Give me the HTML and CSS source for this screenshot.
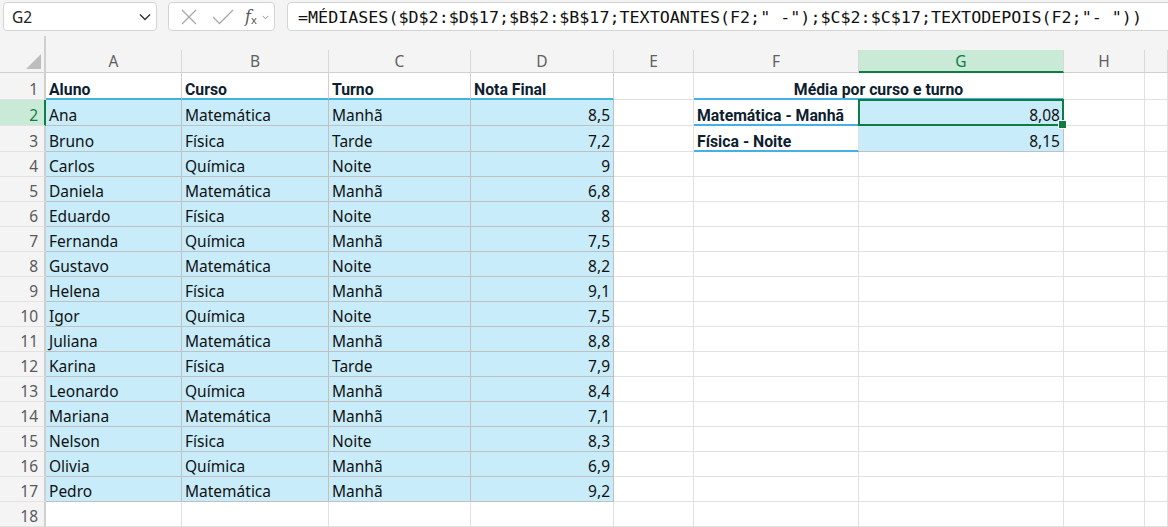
FILE: index.html
```html
<!DOCTYPE html>
<html lang="pt">
<head>
<meta charset="utf-8">
<title>Planilha</title>
<link rel="stylesheet" href="styles.css">
</head>
<body>
<div class="toolbar">
  <div class="namebox"><span>G2</span>
    <svg class="chev" width="12" height="8" viewBox="0 0 12 8"><path d="M1 1.5 L6 6.5 L11 1.5" fill="none" stroke="#333" stroke-width="1.4"/></svg>
  </div>
  <div class="fnbox">
    <svg class="ico" width="18" height="18" viewBox="0 0 18 18"><path d="M2 2 L16 16 M16 2 L2 16" stroke="#a8a8a8" stroke-width="1.3" fill="none"/></svg>
    <svg class="ico chk" width="22" height="16" viewBox="0 0 22 16"><path d="M1 8 L7.5 14.5 L21 1" stroke="#a8a8a8" stroke-width="1.3" fill="none"/></svg>
    <span class="fx"><i>f</i><sub>x</sub></span>
    <svg class="chev2" width="7" height="5" viewBox="0 0 7 5"><path d="M0.5 0.8 L3.5 3.8 L6.5 0.8" fill="none" stroke="#999" stroke-width="1"/></svg>
  </div>
  <div class="formula">=MÉDIASES($D$2:$D$17;$B$2:$B$17;TEXTOANTES(F2;" -");$C$2:$C$17;TEXTODEPOIS(F2;"- "))</div>
</div>

<div class="sheet">
  <div class="corner"><svg class="tri" width="15" height="15" viewBox="0 0 15 15"><path d="M15 0 L15 15 L0 15 Z" fill="#bdbdbd"/></svg></div>
  <div class="ch"><div class="lab">A</div></div>
  <div class="ch"><div class="lab">B</div></div>
  <div class="ch"><div class="lab">C</div></div>
  <div class="ch"><div class="lab">D</div></div>
  <div class="ch"><div class="lab">E</div></div>
  <div class="ch"><div class="lab">F</div></div>
  <div class="ch"><div class="lab sel">G</div></div>
  <div class="ch"><div class="lab">H</div></div>
  <div class="ch"><div class="lab"></div></div>

  <div class="rh">1</div>
  <div class="c th">Aluno</div><div class="c th">Curso</div><div class="c th">Turno</div><div class="c th">Nota Final</div>
  <div class="c"></div><div class="c th2">Média por curso e turno</div><div class="c"></div><div class="c"></div>

  <div class="rh rsel">2</div>
  <div class="c t">Ana</div><div class="c t">Matemática</div><div class="c t">Manhã</div><div class="c t n">8,5</div>
  <div class="c"></div><div class="c fk">Matemática - Manhã</div><div class="c t n gsel">8,08</div><div class="c"></div><div class="c"></div>

  <div class="rh">3</div>
  <div class="c t">Bruno</div><div class="c t">Física</div><div class="c t">Tarde</div><div class="c t n">7,2</div>
  <div class="c"></div><div class="c fk">Física - Noite</div><div class="c t n">8,15</div><div class="c"></div><div class="c"></div>

  <div class="rh">4</div>
  <div class="c t">Carlos</div><div class="c t">Química</div><div class="c t">Noite</div><div class="c t n">9</div>
  <div class="c"></div><div class="c"></div><div class="c"></div><div class="c"></div><div class="c"></div>

  <div class="rh">5</div>
  <div class="c t">Daniela</div><div class="c t">Matemática</div><div class="c t">Manhã</div><div class="c t n">6,8</div>
  <div class="c"></div><div class="c"></div><div class="c"></div><div class="c"></div><div class="c"></div>

  <div class="rh">6</div>
  <div class="c t">Eduardo</div><div class="c t">Física</div><div class="c t">Noite</div><div class="c t n">8</div>
  <div class="c"></div><div class="c"></div><div class="c"></div><div class="c"></div><div class="c"></div>

  <div class="rh">7</div>
  <div class="c t">Fernanda</div><div class="c t">Química</div><div class="c t">Manhã</div><div class="c t n">7,5</div>
  <div class="c"></div><div class="c"></div><div class="c"></div><div class="c"></div><div class="c"></div>

  <div class="rh">8</div>
  <div class="c t">Gustavo</div><div class="c t">Matemática</div><div class="c t">Noite</div><div class="c t n">8,2</div>
  <div class="c"></div><div class="c"></div><div class="c"></div><div class="c"></div><div class="c"></div>

  <div class="rh">9</div>
  <div class="c t">Helena</div><div class="c t">Física</div><div class="c t">Manhã</div><div class="c t n">9,1</div>
  <div class="c"></div><div class="c"></div><div class="c"></div><div class="c"></div><div class="c"></div>

  <div class="rh">10</div>
  <div class="c t">Igor</div><div class="c t">Química</div><div class="c t">Noite</div><div class="c t n">7,5</div>
  <div class="c"></div><div class="c"></div><div class="c"></div><div class="c"></div><div class="c"></div>

  <div class="rh">11</div>
  <div class="c t">Juliana</div><div class="c t">Matemática</div><div class="c t">Manhã</div><div class="c t n">8,8</div>
  <div class="c"></div><div class="c"></div><div class="c"></div><div class="c"></div><div class="c"></div>

  <div class="rh">12</div>
  <div class="c t">Karina</div><div class="c t">Física</div><div class="c t">Tarde</div><div class="c t n">7,9</div>
  <div class="c"></div><div class="c"></div><div class="c"></div><div class="c"></div><div class="c"></div>

  <div class="rh">13</div>
  <div class="c t">Leonardo</div><div class="c t">Química</div><div class="c t">Manhã</div><div class="c t n">8,4</div>
  <div class="c"></div><div class="c"></div><div class="c"></div><div class="c"></div><div class="c"></div>

  <div class="rh">14</div>
  <div class="c t">Mariana</div><div class="c t">Matemática</div><div class="c t">Manhã</div><div class="c t n">7,1</div>
  <div class="c"></div><div class="c"></div><div class="c"></div><div class="c"></div><div class="c"></div>

  <div class="rh">15</div>
  <div class="c t">Nelson</div><div class="c t">Física</div><div class="c t">Noite</div><div class="c t n">8,3</div>
  <div class="c"></div><div class="c"></div><div class="c"></div><div class="c"></div><div class="c"></div>

  <div class="rh">16</div>
  <div class="c t">Olivia</div><div class="c t">Química</div><div class="c t">Manhã</div><div class="c t n">6,9</div>
  <div class="c"></div><div class="c"></div><div class="c"></div><div class="c"></div><div class="c"></div>

  <div class="rh">17</div>
  <div class="c t">Pedro</div><div class="c t">Matemática</div><div class="c t">Manhã</div><div class="c t n">9,2</div>
  <div class="c"></div><div class="c"></div><div class="c"></div><div class="c"></div><div class="c"></div>

  <div class="rh">18</div>
  <div class="c"></div><div class="c"></div><div class="c"></div><div class="c"></div>
  <div class="c"></div><div class="c"></div><div class="c"></div><div class="c"></div><div class="c"></div>
</div>
</body>
</html>
```

FILE: styles.css
```css
* { box-sizing: border-box; }
html, body { margin: 0; padding: 0; }
body {
  width: 1168px;
  height: 527px;
  overflow: hidden;
  background: #ffffff;
  font-family: "Noto Sans", "Open Sans", sans-serif;
  color: #111;
}

/* ---------- formula bar ---------- */
.toolbar {
  height: 36px;
  background: #f4f4f4;
  display: flex;
  align-items: flex-start;
  padding: 2px 0 0 3px;
  gap: 11px;
  overflow: hidden;
}
.namebox, .fnbox, .formula {
  height: 29px;
  background: #fff;
  border: 1px solid #d4d4d4;
  border-radius: 4px;
}
.namebox {
  width: 154px;
  flex: none;
  display: flex;
  align-items: center;
  justify-content: space-between;
  padding: 0 5px 0 8px;
  font-size: 15.5px;
  color: #222;
}
.fnbox {
  width: 107px;
  flex: none;
  display: flex;
  align-items: center;
  padding: 0 0 0 11px;
}
.fnbox .ico { flex: none; }
.fnbox .chk { margin-left: 14px; }
.fx {
  margin-left: 11px;
  font-family: "DejaVu Serif", "Liberation Serif", serif;
  color: #555;
  font-size: 16px;
  line-height: 1;
}
.fx sub { font-size: 11px; font-style: normal; font-family: "Noto Sans", sans-serif; vertical-align: -2px; }
.chev2 { margin-left: 5px; margin-top: 2px; }
.formula {
  flex: 1;
  margin-left: 1px;
  margin-right: -12px;
  padding: 0 0 0 10px;
  display: flex;
  align-items: center;
  font-family: "DejaVu Sans Mono", "Liberation Mono", monospace;
  font-size: 16.7px;
  color: #111;
  white-space: nowrap;
}

/* ---------- sheet grid ---------- */
.sheet {
  display: grid;
  grid-template-columns: 46px 136px 147px 142px 143px 80px 165px 205px 81px 1fr;
  grid-template-rows: 37px 27px 26px 26px repeat(15, 25px);
}
.corner {
  background: #f4f4f4;
  border-right: 2px solid #cfcfcf;
  border-bottom: 1px solid #d0d0d0;
  display: flex;
  align-items: flex-end;
  justify-content: flex-end;
  padding: 0 3px 3px 0;
}
.ch {
  background: #f4f4f4;
  border-bottom: 1px solid #d0d0d0;
  padding-top: 14px;
}
.lab {
  height: 22px;
  border-right: 1px solid #d8d8d8;
  display: flex;
  align-items: center;
  justify-content: center;
  font-size: 15.5px;
  color: #606060;
}
.lab.sel {
  height: 23px;
  background: #caead8;
  border-bottom: 2px solid #107c41;
  color: #107c41;
}
.rh {
  background: #f4f4f4;
  border-right: 2px solid #cfcfcf;
  border-bottom: 1px solid #e2e2e2;
  display: flex;
  align-items: flex-end;
  justify-content: flex-end;
  padding: 0 6px 0 0;
  font-size: 15.5px;
  line-height: 20px;
  color: #5a5a5a;
}
.rh.rsel {
  background: #caead8;
  border-right-color: #107c41;
  color: #107c41;
}

.c {
  border-right: 1px solid #e1e1e1;
  border-bottom: 1px solid #e1e1e1;
  padding: 0 3px 0 3px;
  display: flex;
  align-items: flex-end;
  font-size: 15.5px;
  line-height: 20px;
  color: #111;
  white-space: nowrap;
  overflow: hidden;
}
.th, .th2, .fk {
  font-family: Roboto, "Noto Sans", sans-serif;
  font-weight: 700;
  font-size: 15.8px;
  line-height: 16px;
  color: #0e1e30;
  border-bottom: 2px solid #45b1e1;
}
.th { border-right-color: #d0d0d0; }
.th2 {
  grid-column: span 2;
  justify-content: center;
}
.t {
  background: #c9ecfa;
  border-right-color: #c0c0c0;
  border-bottom-color: #c0c0c0;
}
.n { justify-content: flex-end; }

/* selected cell G2 */
.gsel { position: relative; overflow: visible; }
.gsel::after {
  content: "";
  position: absolute;
  left: -1px;
  top: -1px;
  right: -1px;
  bottom: -1px;
  border: 2px solid #107c41;
  pointer-events: none;
}
.gsel::before {
  content: "";
  position: absolute;
  right: -4px;
  bottom: -4px;
  width: 7px;
  height: 7px;
  background: #107c41;
  border: 1px solid #fff;
  z-index: 2;
}
```
